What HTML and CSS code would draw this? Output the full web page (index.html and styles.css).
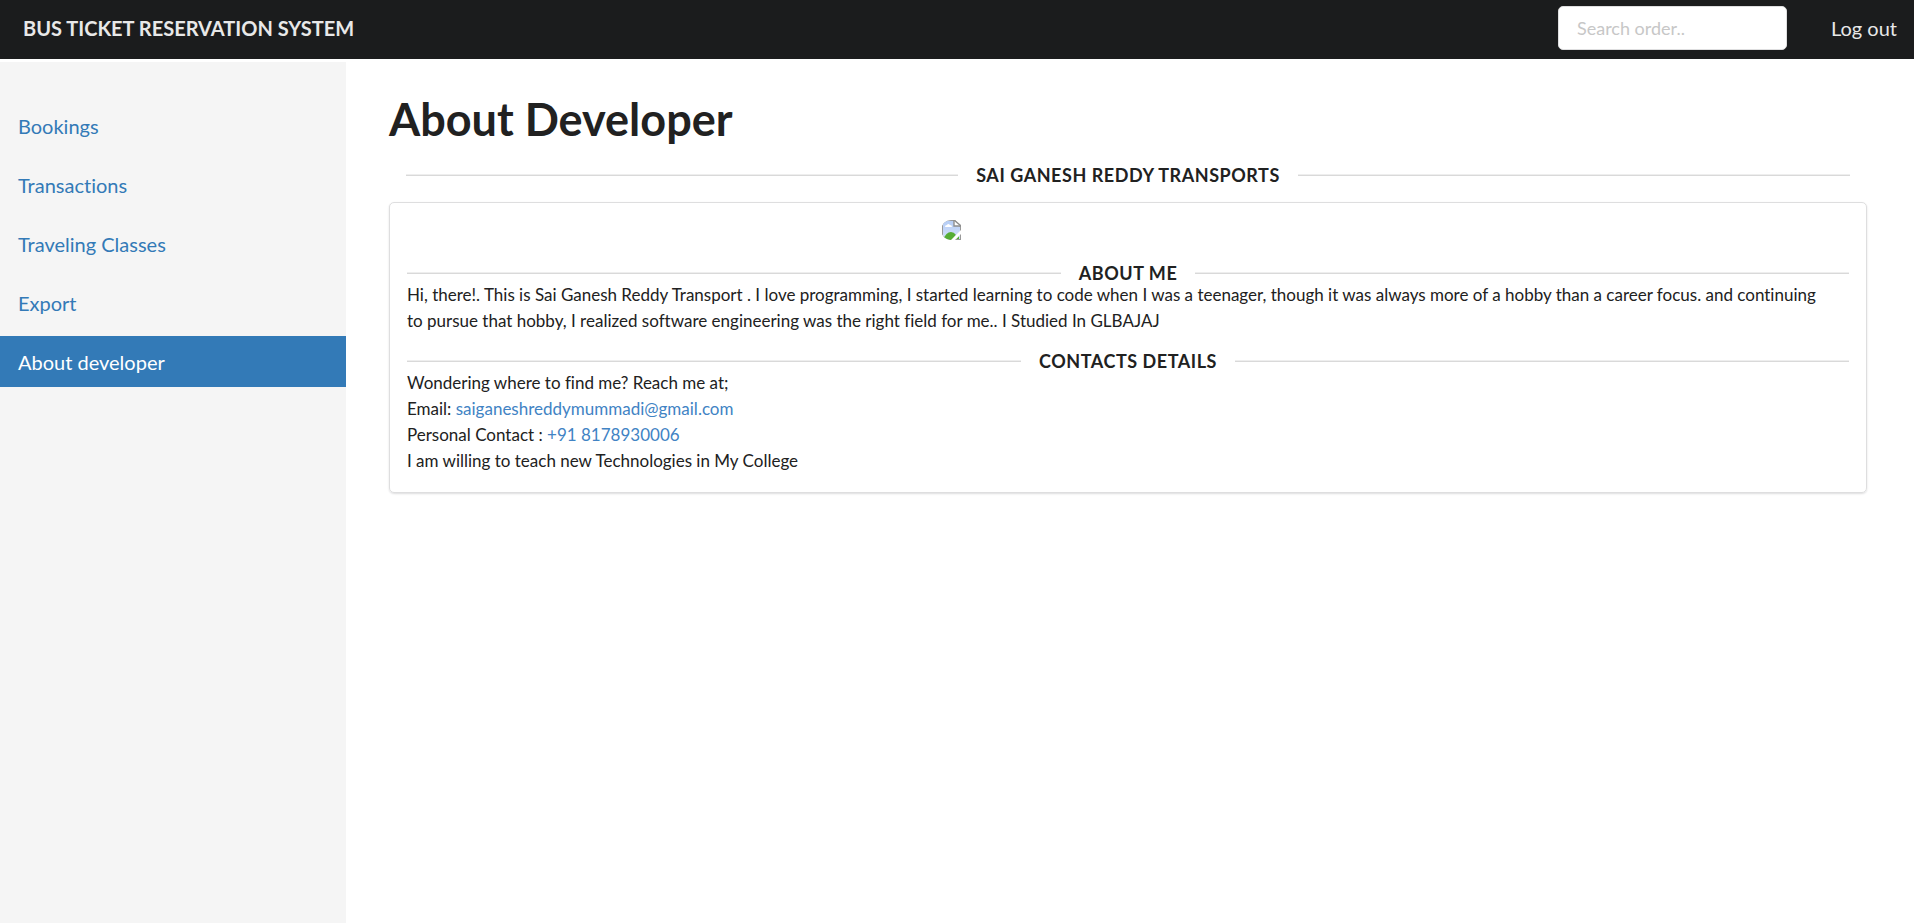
FILE: index.html
```html
<!DOCTYPE html>
<html lang="en">
<head>
<meta charset="utf-8">
<title>About Developer</title>
<link rel="stylesheet" href="styles.css">
</head>
<body>
<header class="topbar">
  <a class="brand" href="#">BUS TICKET RESERVATION SYSTEM</a>
  <input class="search" type="search" placeholder="Search order.." aria-label="Search order">
  <a class="logout" href="#">Log out</a>
</header>
<div class="layout">
  <nav class="sidebar" aria-label="Main">
    <a class="nav-link" href="#">Bookings</a>
    <a class="nav-link" href="#">Transactions</a>
    <a class="nav-link" href="#">Traveling Classes</a>
    <a class="nav-link" href="#">Export</a>
    <a class="nav-link active" href="#" aria-current="page">About developer</a>
  </nav>
  <main class="content">
    <h1 class="title">About Developer</h1>
    <h2 class="divider">SAI GANESH REDDY TRANSPORTS</h2>
    <section class="segment">
      <div class="photo">
        <svg class="avatar" width="20" height="20" viewBox="0 0 20 20" role="img" aria-label="Developer photo">
          <defs>
            <linearGradient id="sky" x1="0" y1="0" x2="0" y2="1"><stop offset="0" stop-color="#b5cdf5"/><stop offset="1" stop-color="#d3e0fa"/></linearGradient>
            <clipPath id="round"><path d="M10 0H17L20 4V20H10A10 10 0 0 1 10 0Z"/></clipPath>
          </defs>
          <g clip-path="url(#round)">
            <path d="M1 0H14L20 6V20H1Z" fill="#999"/>
            <path d="M2 1H13L19 7V19H2Z" fill="url(#sky)"/>
            <path d="M4 7Q4 5 6 5Q7 3 9 5Q11 5 11 7Z" fill="#fff"/>
            <path d="M2 20Q5 12 10 12Q13 12 15 15L11 20Z" fill="#56ad35"/>
            <path d="M15 19L18 16V19Z" fill="#56ad35"/>
            <path d="M13 0V6H20" fill="#fff" stroke="#8f8f8f" stroke-width="1.4"/>
            <path d="M13 0L20 6" stroke="#8f8f8f" stroke-width="1.4"/>
            <path d="M10 20L20 10V14L14 20Z" fill="#fff"/>
          </g>
        </svg>
      </div>
      <h2 class="divider">ABOUT ME</h2>
      <p class="text">Hi, there!. This is Sai Ganesh Reddy Transport . I love programming, I started learning to code when I was a teenager, though it was always more of a hobby than a career focus. and continuing to pursue that hobby, I realized software engineering was the right field for me.. I Studied In GLBAJAJ</p>
      <h2 class="divider">CONTACTS DETAILS</h2>
      <p class="text">Wondering where to find me? Reach me at;<br>
      Email: <a class="link" href="mailto:saiganeshreddymummadi@gmail.com">saiganeshreddymummadi@gmail.com</a><br>
      Personal Contact : <a class="link" href="tel:+918178930006">+91 8178930006</a><br>
      I am willing to teach new Technologies in My College</p>
    </section>
  </main>
</div>
</body>
</html>
```
FILE: styles.css
```css
* {
  box-sizing: border-box;
}

body {
  margin: 0;
  min-height: 100vh;
  display: flex;
  flex-direction: column;
  background: #fff;
  color: #212121;
  font-family: Lato, "Liberation Sans", sans-serif;
  font-size: 17px;
  line-height: 26px;
}

a {
  text-decoration: none;
}

.topbar {
  display: flex;
  align-items: center;
  padding: 6px 17px 9px 23px;
  background: #1b1c1d;
  font-size: 20px;
}

.brand {
  margin-right: auto;
  color: #e8e8e8;
  font-weight: 700;
}

.search {
  width: 229px;
  height: 44px;
  margin-right: 44px;
  padding: 0 18px;
  border: 1px solid #dededf;
  border-radius: 5px;
  background: #fff;
  color: #212121;
  font: inherit;
  font-size: 18px;
}

.search::placeholder {
  color: #c7c7c7;
}

.logout {
  color: #e8e8e8;
}

.layout {
  display: flex;
  flex: 1;
  padding-top: 3px;
}

.sidebar {
  display: flex;
  flex: 0 0 346px;
  flex-direction: column;
  gap: 8px;
  padding-top: 38px;
  background: #f5f5f5;
  font-size: 20px;
  font-variant-ligatures: no-common-ligatures;
}

.nav-link {
  padding: 13px 18px 12px;
  color: #337ab7;
}

.nav-link.active {
  background: #337ab7;
  color: #fff;
}

.content {
  flex: 1;
  padding: 27px 47px 48px 43px;
}

.title {
  margin: 0 0 17px;
  font-size: 45px;
  font-weight: 700;
  line-height: 60px;
}

.divider {
  display: flex;
  align-items: center;
  gap: 18px;
  margin: 0;
  font-size: 18px;
  font-weight: 700;
  line-height: 18px;
  letter-spacing: 0.03em;
}

.divider::before,
.divider::after {
  content: "";
  flex: 1;
  border-top: 1px solid #eee;
  border-bottom: 1px solid #d9d9d9;
}

.content > .divider {
  padding: 0 17px;
}

.segment {
  margin-top: 18px;
  padding: 17px 17px 18px;
  border: 1px solid #dededf;
  border-radius: 5px;
  box-shadow: 0 1px 2px rgba(34, 36, 38, 0.15);
}

.photo {
  display: flex;
  padding-left: 37%;
  margin-bottom: 24px;
}

.text {
  margin: 0 0 18px;
  padding-right: 18px;
  font-variant-ligatures: no-common-ligatures;
}

.text:last-child {
  margin: 0;
}

.link {
  color: #4183c4;
}
```
